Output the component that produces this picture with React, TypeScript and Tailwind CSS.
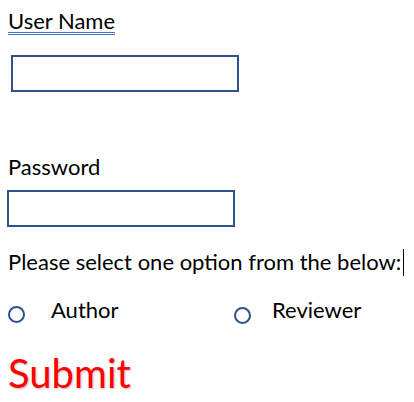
export default function App() {
  return (
    <div className="w-[414px] h-[402px] bg-white flex flex-col font-['Lato','Liberation_Sans',sans-serif] text-black">
      <div className="mt-[10px] ml-2">
        <span className="inline-block text-[22px] leading-none border-b-[3px] border-double border-[#4472c4]">User Name</span>
      </div>
      <div className="mt-[20px] ml-[11px] w-[228px] h-[37px] border-2 border-[#2f528f]" />
      <div className="mt-[64px] ml-2 text-[22px] leading-none">Password</div>
      <div className="mt-[12px] ml-[7px] w-[228px] h-[37px] border-2 border-[#2f528f]" />
      <div className="mt-[24px] ml-2 text-[22px] leading-none flex">
        <span>Please select one option from the below:</span>
        <span className="inline-block w-px h-[27px] bg-black -mt-[2px] ml-[2px]" />
      </div>
      <div className="mt-[23px] flex items-start text-[22px] leading-none">
        <div className="ml-2 w-[226px] flex items-start">
          <span className="w-[17px] h-[17px] rounded-full border-2 border-[#2f528f] mt-[7px]" />
          <span className="ml-[26px]">Author</span>
        </div>
        <div className="flex items-start">
          <span className="w-[17px] h-[17px] rounded-full border-2 border-[#2f528f] mt-[8px]" />
          <span className="ml-[21px]">Reviewer</span>
        </div>
      </div>
      <div className="mt-[29px] ml-2 text-[40px] leading-none text-[#ff0000] [text-shadow:1px_1px_2px_rgba(0,0,0,0.25)]">Submit</div>
    </div>
  );
}
